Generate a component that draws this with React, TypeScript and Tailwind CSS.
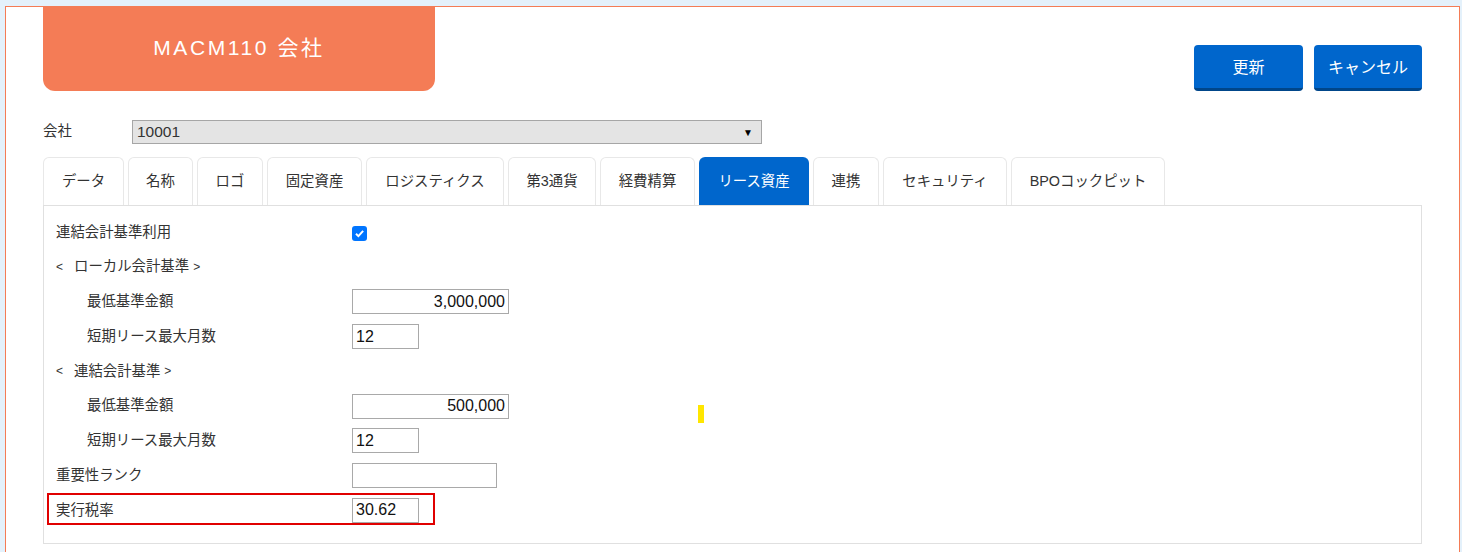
import React from "react";

const tabs = [
    {label: "データ", w: "w-[81px]"},
    {label: "名称", w: "w-[65px]"},
    {label: "ロゴ", w: "w-[66px]"},
    {label: "固定資産", w: "w-[95px]"},
    {label: "ロジスティクス", w: "w-[138px]"},
    {label: "第3通貨", w: "w-[88px]"},
    {label: "経費精算", w: "w-[95px]"},
    {label: "リース資産", w: "w-[110px]", active: true},
    {label: "連携", w: "w-[66px]"},
    {label: "セキュリティ", w: "w-[124px]"},
    {label: "BPOコックピット", w: "w-[154px]"},
]

const font = "font-['Liberation_Sans','Noto_Sans_CJK_JP',sans-serif]"

const TextBox = ({value, w, right}: { value: string, w: string, right?: boolean }) => (
    <div
        className={`
            ${w}
            h-[25px]
            border
            border-[#a9a9a9]
            bg-white
            px-[3px]
            flex
            items-center
            text-[16px]
            text-[#111]
            ${right ? "justify-end" : ""}
        `}
    >
        {value}
    </div>
)

const Row = ({label, indent, children}: { label: React.ReactNode, indent?: boolean, children?: React.ReactNode }) => (
    <div className="relative flex items-center h-[34.75px]">
        <div className={`w-[296px] text-[14.4px] text-[#333] ${indent ? "pl-[31px]" : ""}`}>
            {label}
        </div>
        {children}
    </div>
)

const Section = ({text}: { text: string }) => (
    <span className="flex items-center">
        <span className="text-[12px] w-[18px]">&lt;</span>
        <span>{text}</span>
        <span className="text-[12px] ml-[4px]">&gt;</span>
    </span>
)

const App = () => {
    return (
        <div className={`min-h-screen bg-[#e4f1fb] pt-[6px] pl-[5px] pr-[2px] ${font}`}>
            <div className="bg-white border border-b-0 border-[#f47c56] px-[37px] pb-[20px]">
                {/* header */}
                <div className="flex justify-between items-start">
                    <div
                        className="
                            w-[392px]
                            h-[84px]
                            bg-[#f47c56]
                            rounded-b-[12px]
                            flex
                            items-center
                            justify-center
                            text-white
                            text-[21px]
                            tracking-[2.6px]
                            pb-[3px]
                        "
                    >
                        MACM110 会社
                    </div>
                    <div className="flex gap-[11px] mt-[38px]">
                        <button
                            className="
                                w-[109px]
                                h-[46px]
                                rounded-[4px]
                                bg-[#0066cc]
                                border-b-[3px]
                                border-[#00468a]
                                text-white
                                text-[16px]
                                pt-[2px]
                            "
                        >
                            更新
                        </button>
                        <button
                            className="
                                w-[108px]
                                h-[46px]
                                rounded-[4px]
                                bg-[#0066cc]
                                border-b-[3px]
                                border-[#00468a]
                                text-white
                                text-[16px]
                                pt-[2px]
                            "
                        >
                            キャンセル
                        </button>
                    </div>
                </div>

                {/* company */}
                <div className="flex items-center mt-[29px]">
                    <div className="w-[89px] text-[14.4px] text-[#333]">会社</div>
                    <div
                        className="
                            w-[630px]
                            h-[24px]
                            bg-[#e4e4e4]
                            border
                            border-[#a6a6a6]
                            flex
                            items-center
                            justify-between
                            pl-[4px]
                            pr-[8px]
                            text-[15.5px]
                            text-[#333]
                        "
                    >
                        <span>10001</span>
                        <span className="text-[10px] text-black">▼</span>
                    </div>
                </div>

                {/* tabs */}
                <div className="flex gap-[4px] mt-[13px]">
                    {tabs.map((t) => (
                        <div
                            key={t.label}
                            className={`
                                ${t.w}
                                h-[48px]
                                rounded-t-[6px]
                                flex
                                items-center
                                justify-center
                                text-[14.4px]
                                pt-[1px]
                                ${t.active
                                ? "bg-[#0066cc] text-white"
                                : "bg-white text-[#333] border border-b-0 border-[#e8e8e8]"}
                            `}
                        >
                            {t.label}
                        </div>
                    ))}
                </div>

                {/* panel */}
                <div className="relative w-[1379px] border border-[#e0e0e0] pt-[9px] pb-[15px] px-[12px]">
                    <Row label="連結会計基準利用">
                        <div className="w-[15px] h-[15px] rounded-[3px] bg-[#0075ff] flex items-center justify-center mt-[3px]">
                            <svg width="11" height="11" viewBox="0 0 10 10">
                                <path d="M1.8 5.2 L4 7.4 L8.3 2.6" stroke="white" strokeWidth="1.8" fill="none"/>
                            </svg>
                        </div>
                    </Row>
                    <Row label={<Section text="ローカル会計基準"/>}/>
                    <Row label="最低基準金額" indent>
                        <TextBox value="3,000,000" w="w-[157px]" right/>
                    </Row>
                    <Row label="短期リース最大月数" indent>
                        <TextBox value="12" w="w-[67px]"/>
                    </Row>
                    <Row label={<Section text="連結会計基準"/>}/>
                    <Row label="最低基準金額" indent>
                        <TextBox value="500,000" w="w-[157px]" right/>
                    </Row>
                    <Row label="短期リース最大月数" indent>
                        <TextBox value="12" w="w-[67px]"/>
                    </Row>
                    <Row label="重要性ランク">
                        <TextBox value="" w="w-[145px]"/>
                    </Row>
                    <Row label="実行税率">
                        <TextBox value="30.62" w="w-[67px]"/>
                        <span className="absolute left-[-9px] top-[0px] w-[388px] h-[32px] border-2 border-[#e00000]"/>
                    </Row>

                    <span className="absolute left-[654px] top-[199px] w-[6px] h-[18px] bg-[#ffe600]"/>
                </div>
            </div>
        </div>
    )
}

export default App
